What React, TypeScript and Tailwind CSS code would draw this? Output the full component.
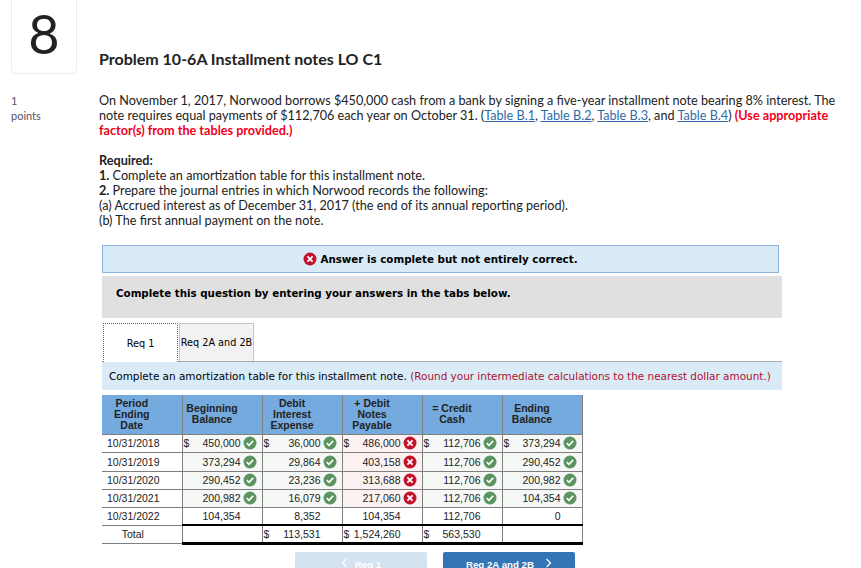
import React from "react";

const Check = () => (
  <svg width="14" height="14" viewBox="0 0 14 14" className="shrink-0">
    <circle cx="7" cy="7" r="6.5" fill="#5b9460" />
    <path d="M3.8 7.2 L6 9.3 L10.2 4.9" fill="none" stroke="#fff" strokeWidth="1.6" />
  </svg>
);
const Cross = () => (
  <svg width="14" height="14" viewBox="0 0 14 14" className="shrink-0">
    <circle cx="7" cy="7" r="6.5" fill="#c3122b" />
    <path d="M4.4 4.4 L9.6 9.6 M9.6 4.4 L4.4 9.6" fill="none" stroke="#fff" strokeWidth="1.8" />
  </svg>
);

type C = { d?: boolean; v: string; m?: "c" | "x" };
const rows: { date: string; h: string; cells: C[] }[] = [
  { date: "10/31/2018", h: "h-[18px]", cells: [
    { d: true, v: "450,000", m: "c" }, { d: true, v: "36,000", m: "c" }, { d: true, v: "486,000", m: "x" }, { d: true, v: "112,706", m: "c" }, { d: true, v: "373,294", m: "c" } ] },
  { date: "10/31/2019", h: "h-[19px]", cells: [
    { v: "373,294", m: "c" }, { v: "29,864", m: "c" }, { v: "403,158", m: "x" }, { v: "112,706", m: "c" }, { v: "290,452", m: "c" } ] },
  { date: "10/31/2020", h: "h-[18px]", cells: [
    { v: "290,452", m: "c" }, { v: "23,236", m: "c" }, { v: "313,688", m: "x" }, { v: "112,706", m: "c" }, { v: "200,982", m: "c" } ] },
  { date: "10/31/2021", h: "h-[18px]", cells: [
    { v: "200,982", m: "c" }, { v: "16,079", m: "c" }, { v: "217,060", m: "x" }, { v: "112,706", m: "c" }, { v: "104,354", m: "c" } ] },
  { date: "10/31/2022", h: "h-[18px]", cells: [
    { v: "104,354" }, { v: "8,352" }, { v: "104,354" }, { v: "112,706" }, { v: "0" } ] },
];

const Cell = ({ c, last }: { c: C; last?: boolean }) => (
  <td className={`border-l border-b border-[#7f7f7f] p-0 ${last ? "border-r" : ""} ${c.m === "c" ? "bg-[#f5f8f5]" : c.m === "x" ? "bg-[#fdf2f2]" : ""}`}>
    <div className="flex items-center justify-between pl-px pr-[5px]">
      <span>{c.d ? "$" : ""}</span>
      <span className="flex items-center gap-[2px]">
        <span>{c.v}</span>
        {c.m === "c" ? <Check /> : c.m === "x" ? <Cross /> : <span className="w-[14px]" />}
      </span>
    </div>
  </td>
);

const Total = ({ d, v, last }: { d?: boolean; v?: string; last?: boolean }) => (
  <td className={`border-l border-t-2 border-b-[3px] border-t-black border-b-black border-l-[#7f7f7f] p-0 ${last ? "border-r border-r-[#7f7f7f]" : ""}`}>
    <div className="flex items-center justify-between pl-px pr-[21px]">
      <span>{d ? "$" : ""}</span>
      <span>{v}</span>
    </div>
  </td>
);

const L = ({ children }: { children: React.ReactNode }) => (
  <a className="text-[#2f6ba8] underline">{children}</a>
);

const Th = ({ children, last, first }: { children: React.ReactNode; last?: boolean; first?: boolean }) => (
  <th className={`w-[80px] border-b border-[#7f7f7f] p-0 pr-[20px] ${first ? "" : "border-l"} ${last ? "border-r" : ""}`}>{children}</th>
);

export default function App() {
  return (
    <div className="h-[568px] w-[861px] overflow-hidden bg-white text-[12.65px] leading-[15px] text-[#222] font-['Lato','Noto_Sans',sans-serif]">
      <div className="flex">
        <div className="ml-[11px] flex w-[88px] flex-col">
          <div className="flex h-[74px] w-[66px] items-center justify-center rounded-b-[4px] border border-t-0 border-[#ececec] pb-[6px] text-[54px] leading-none text-[#222]">8</div>
          <div className="mt-[19px] text-[11px] leading-[15px] text-[#556]">
            <div>1</div>
            <div>points</div>
          </div>
        </div>
        <div className="w-[745px]">
          <h1 className="mt-[50px] text-[16px] font-bold leading-[18px]">Problem 10-6A Installment notes LO C1</h1>
          <p className="mt-[25px] w-[745px]">
            On November 1, 2017, Norwood borrows $450,000 cash from a bank by signing a five-year installment note bearing 8% interest. The note requires equal payments of $112,706 each year on October 31. (<L>Table B.1</L>, <L>Table B.2</L>, <L>Table B.3</L>, and <L>Table B.4</L>) <b className="text-[#f00020]">(Use appropriate factor(s) from the tables provided.)</b>
          </p>
          <div className="mt-[15px]">
            <div><b>Required:</b></div>
            <div><b>1.</b> Complete an amortization table for this installment note.</div>
            <div><b>2.</b> Prepare the journal entries in which Norwood records the following:</div>
            <div>(a) Accrued interest as of December 31, 2017 (the end of its annual reporting period).</div>
            <div>(b) The first annual payment on the note.</div>
          </div>
        </div>
      </div>

      <div className="ml-[102px] mt-[17px] w-[680px] text-[10.3px] text-black font-['DejaVu_Sans',sans-serif]">
        <div className="flex h-[28px] w-[677px] items-center justify-center gap-[3px] border border-[#8ab4dc] bg-[#d9ebf7] font-bold">
          <Cross />
          <span>Answer is complete but not entirely correct.</span>
        </div>
        <div className="mt-[3px] h-[42px] bg-[#e0e0e0] pl-[14px] pt-[10px] font-bold">Complete this question by entering your answers in the tabs below.</div>
        <div className="mt-[5px] flex h-[39px] border-b border-[#aaa] pl-px text-[9.7px]">
          <div className="flex h-[39px] w-[75px] items-center justify-center border-x border-t border-dotted border-[#4a6f96] bg-white">Req 1</div>
          <div className="ml-px flex h-[38px] w-[75px] items-center justify-center border border-b-0 border-[#c4c4c4] bg-[#f2f2f2]">Req 2A and 2B</div>
        </div>
        <div className="flex h-[28px] items-center bg-[#d9ebf7] pl-[7px] text-[10.45px]">
          <span>Complete an amortization table for this installment note. <span className="text-[#b01030]">(Round your intermediate calculations to the nearest dollar amount.)</span></span>
        </div>
        <table className="mt-[5px] w-[480px] table-fixed border-collapse text-[10.5px] leading-[12px] text-[#222] font-['Liberation_Sans',sans-serif]">
          <thead>
            <tr className="h-[39px] bg-[#74aade] text-center align-middle font-bold leading-[11px]">
              <Th first>Period<br />Ending<br />Date</Th>
              <Th>Beginning<br />Balance</Th>
              <Th>Debit<br />Interest<br />Expense</Th>
              <Th>+ Debit<br />Notes<br />Payable</Th>
              <Th>= Credit<br />Cash</Th>
              <Th last>Ending<br />Balance</Th>
            </tr>
          </thead>
          <tbody>
            {rows.map((r) => (
              <tr key={r.date} className={r.h}>
                <td className="border-b border-[#7f7f7f] p-0 pl-[5px]">{r.date}</td>
                {r.cells.map((c, i) => <Cell key={i} c={c} last={i === 4} />)}
              </tr>
            ))}
            <tr className="h-[18px]">
              <td className="border-b border-[#7f7f7f] p-0 pr-[18px] text-center">Total</td>
              <Total />
              <Total d v="113,531" />
              <Total d v="1,524,260" />
              <Total d v="563,530" />
              <Total last />
            </tr>
          </tbody>
        </table>
        <div className="ml-[193px] mt-[7px] flex gap-[16px] text-[9.7px] font-bold text-white font-['Liberation_Sans',sans-serif]">
          <div className="flex h-[30px] w-[132px] items-start justify-center gap-[7px] rounded-t-[2px] bg-[#d5e3f1] pt-[5px]">
            <svg width="7" height="10" viewBox="0 0 7 10" className="mt-px"><path d="M5.5 1 L1.5 5 L5.5 9" fill="none" stroke="#fff" strokeWidth="1.2" /></svg>
            <span>Req 1</span>
          </div>
          <div className="flex h-[30px] w-[132px] items-start justify-center gap-[11px] rounded-t-[2px] bg-[#3374b5] pt-[5px]">
            <span>Req 2A and 2B</span>
            <svg width="7" height="10" viewBox="0 0 7 10" className="mt-px"><path d="M1.5 1 L5.5 5 L1.5 9" fill="none" stroke="#fff" strokeWidth="1.2" /></svg>
          </div>
        </div>
      </div>
    </div>
  );
}
